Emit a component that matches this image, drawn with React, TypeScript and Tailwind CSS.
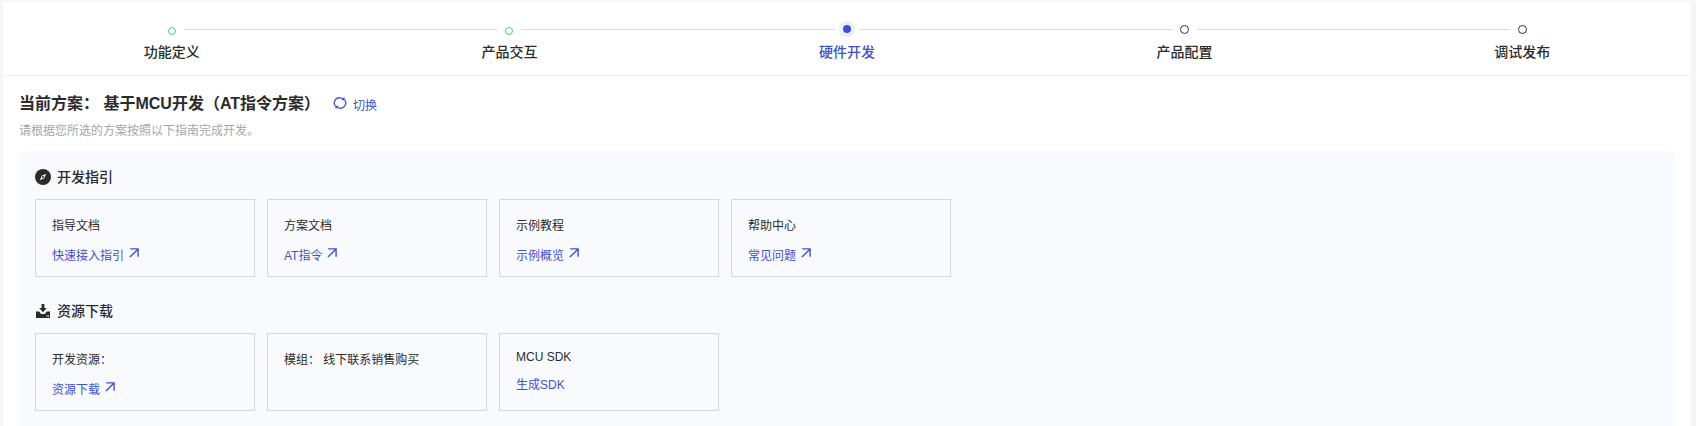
import React from 'react';

type Status = 'done' | 'active' | 'todo';

const steps: { label: string; status: Status }[] = [
  { label: '功能定义', status: 'done' },
  { label: '产品交互', status: 'done' },
  { label: '硬件开发', status: 'active' },
  { label: '产品配置', status: 'todo' },
  { label: '调试发布', status: 'todo' },
];

const guides = [
  { title: '指导文档', link: '快速接入指引' },
  { title: '方案文档', link: 'AT指令' },
  { title: '示例教程', link: '示例概览' },
  { title: '帮助中心', link: '常见问题' },
];

const ArrowIcon = () => (
  <svg width="10" height="10" viewBox="0 0 10 10" fill="none" className="ml-[5px] mb-[6px] text-[#3f50d4]">
    <path d="M1.2 0.9H9.1V8.8M9.1 0.9 0.9 9.1" stroke="currentColor" strokeWidth="1.4" />
  </svg>
);

const CompassIcon = () => (
  <svg width="16" height="16" viewBox="0 0 16 16">
    <circle cx="8" cy="8" r="8" fill="#2b2b2b" />
    <path d="M11.2 4.8 9.2 9.2 4.8 11.2 6.8 6.8Z" fill="#fff" />
    <circle cx="8" cy="8" r="1" fill="#2b2b2b" />
  </svg>
);

const DownloadIcon = () => (
  <svg width="16" height="16" viewBox="0 0 16 16" fill="#2b2b2b">
    <path d="M6.6 1h2.8v4h2.4L8 9.2 4.2 5h2.4Z" />
    <path d="M1 8.6h3.2L6.2 11h3.6l2-2.4H15V15H1Z" />
    <rect x="11.4" y="12.4" width="1.2" height="1.2" fill="#fff" />
    <rect x="13" y="12.4" width="1" height="1.2" fill="#fff" />
  </svg>
);

const SwitchIcon = () => (
  <svg width="14" height="14" viewBox="0 0 14 14" fill="none" stroke="#3f50d4" strokeWidth="1.3" className="mb-[2px]">
    <path d="M2.4 10.2A5.2 5.2 0 0 1 7 1.8C8.6 1.8 9.8 2.4 10.8 3.4" />
    <path d="M11.6 3.8A5.2 5.2 0 0 1 7 12.2C5.4 12.2 4.2 11.6 3.2 10.6" />
    <path d="M11 1.4v2.2H8.8M3 12.6v-2.2h2.2" />
  </svg>
);

const StepDot = ({ status }: { status: Status }) => {
  if (status === 'active') {
    return (
      <div className="w-4 h-4 rounded-full bg-[#eceefb] flex items-center justify-center">
        <div className="w-2 h-2 rounded-full bg-[#3f50d4]" />
      </div>
    );
  }
  if (status === 'done') {
    return <div className="w-2 h-2 mt-[6px] rounded-full border border-[#3ecf97]" />;
  }
  return <div className="w-[9px] h-[9px] mt-[4px] rounded-full border border-[#333]" />;
};

const Card = ({ title, link, arrow = true, tight = false }: { title: string; link?: string; arrow?: boolean; tight?: boolean }) => (
  <div className={`w-[220px] h-[78px] border border-[#d6d8dd] px-4 text-xs text-[#2b2b2b] ${tight ? 'pt-[15px]' : 'pt-[18px]'}`}>
    <div className="leading-4">{title}</div>
    {link && (
      <div className={`flex items-center text-[#3f50d4] leading-4 ${tight ? 'mt-[12px]' : 'mt-[14px]'}`}>
        {link}
        {arrow && <ArrowIcon />}
      </div>
    )}
  </div>
);

const App: React.FC = () => {
  return (
    <div className="h-[426px] overflow-hidden bg-[#f5f6fb] pt-[2px] pl-[3px] pr-[5px] font-['Liberation_Sans','Noto_Sans_CJK_SC',sans-serif]">
      <div className="h-[424px] bg-white">
        <div className="h-[74px] grid grid-cols-5 pt-[19px] border-b border-[#f0f1f3]">
          {steps.map((step, i) => (
            <div key={step.label} className="flex flex-col items-center">
              <div className="w-full h-4 flex items-start">
                <div className={`flex-1 h-px mt-[8px] ${i === 0 ? '' : 'bg-[#d9d8e3]'}`} />
                <div className="mx-1 w-4 h-4 shrink-0 flex justify-center">
                  <StepDot status={step.status} />
                </div>
                <div className={`flex-1 h-px mt-[8px] ${i === steps.length - 1 ? '' : 'bg-[#d9d8e3]'}`} />
              </div>
              <div className={`mt-[5px] text-sm font-medium leading-5 ${step.status === 'active' ? 'text-[#3f50d4]' : 'text-[#2b2b2b]'}`}>
                {step.label}
              </div>
            </div>
          ))}
        </div>

        <div className="pl-[16px] pr-[16px]">
          <div className="mt-[16px] flex items-center h-6">
            <span className="text-base font-bold text-[#2b2b2b] whitespace-pre">当前方案： 基于MCU开发（AT指令方案）</span>
            <span className="ml-[13px] flex items-center text-xs text-[#3f50d4]">
              <SwitchIcon />
              <span className="ml-[6px] mt-[3px]">切换</span>
            </span>
          </div>
          <p className="mt-[7px] text-xs leading-4 text-[#a3a5ab]">请根据您所选的方案按照以下指南完成开发。</p>

          <div className="mt-[12px] h-[280px] rounded-sm bg-[#f9fafe] pl-4 pt-4">
            <div className="flex items-center h-5 text-sm font-medium text-[#2b2b2b]">
              <CompassIcon />
              <span className="ml-[6px]">开发指引</span>
            </div>
            <div className="mt-[12px] flex gap-3">
              {guides.map((g) => (
                <Card key={g.title} title={g.title} link={g.link} />
              ))}
            </div>

            <div className="mt-[24px] flex items-center h-5 text-sm font-medium text-[#2b2b2b]">
              <DownloadIcon />
              <span className="ml-[6px]">资源下载</span>
            </div>
            <div className="mt-[12px] flex gap-3">
              <Card title="开发资源：" link="资源下载" />
              <Card title="模组： 线下联系销售购买" />
              <Card title="MCU SDK" link="生成SDK" arrow={false} tight />
            </div>
          </div>
        </div>
      </div>
    </div>
  );
};

export default App;
